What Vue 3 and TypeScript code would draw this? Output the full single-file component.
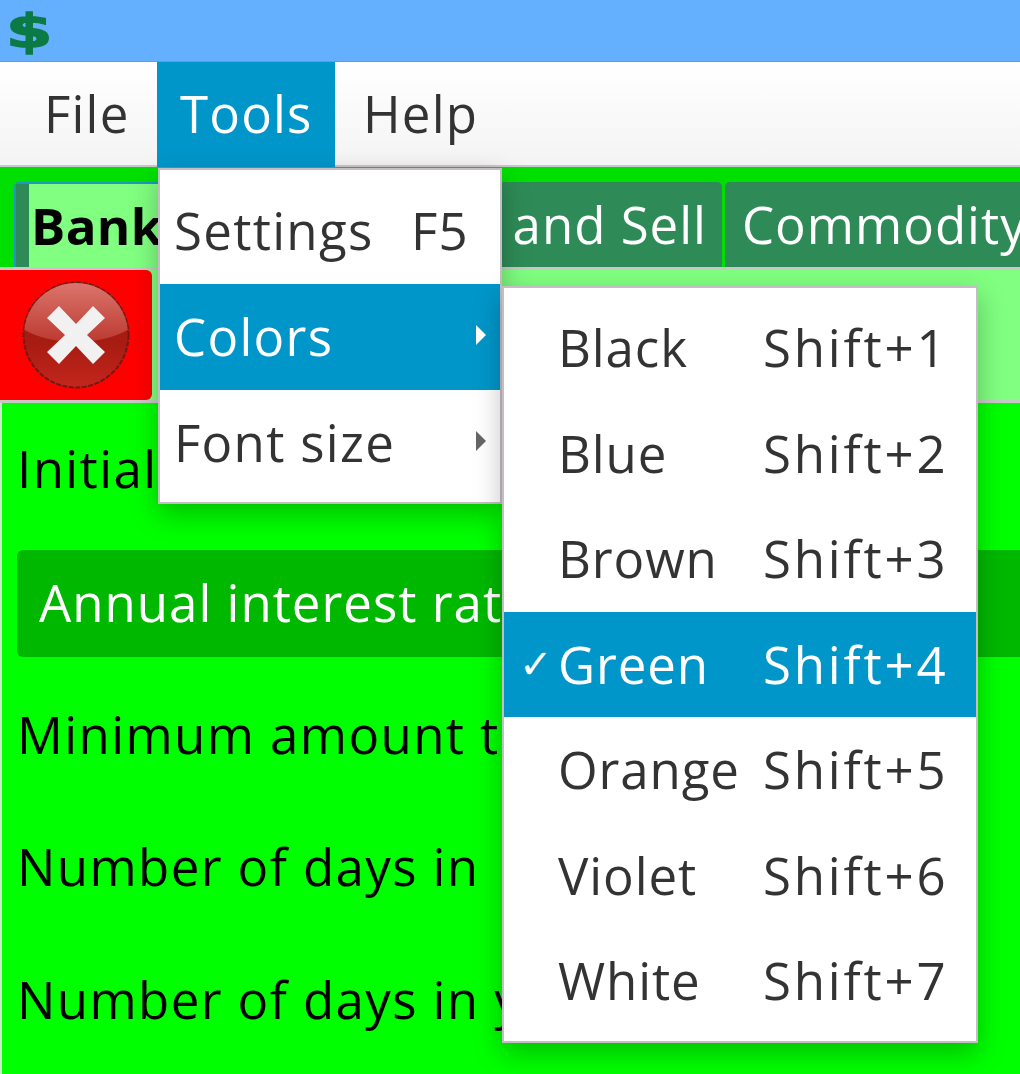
<script setup lang="ts">
const topMenus = ['File', 'Tools', 'Help']
const toolItems = [
  { label: 'Settings', key: 'F5', sub: false, active: false },
  { label: 'Colors', key: '', sub: true, active: true },
  { label: 'Font size', key: '', sub: true, active: false },
]
const colors = ['Black', 'Blue', 'Brown', 'Green', 'Orange', 'Violet', 'White']
const rows = [
  { text: 'Initial deposit', cls: 'plain r1' },
  { text: 'Annual interest rate', cls: 'strong' },
  { text: 'Minimum amount to deposit', cls: 'plain r3' },
  { text: 'Number of days in', cls: 'plain r4' },
  { text: 'Number of days in year', cls: 'plain r5' },
]
</script>

<template>
  <div class="app">
    <header class="title"><span class="dollar">$</span></header>
    <nav class="menubar">
      <div v-for="m in topMenus" :key="m" class="top" :class="{ on: m === 'Tools' }">{{ m }}</div>
    </nav>
    <div class="tabs">
      <div class="tab sel"><span class="stripe"></span><b>Bank</b></div>
      <div class="tab second">Buy and Sell</div>
      <div class="tab third">Commodity</div>
    </div>
    <div class="band">
      <button class="close" type="button" aria-label="Close">
        <svg width="110" height="110" viewBox="0 0 110 110">
          <defs>
            <linearGradient id="ball" x1="0" y1="0" x2="0" y2="1">
              <stop offset="0" stop-color="#9c2018" />
              <stop offset=".6" stop-color="#a81c12" />
              <stop offset="1" stop-color="#c4261c" />
            </linearGradient>
            <linearGradient id="gloss" x1="0" y1="0" x2="0" y2="1">
              <stop offset="0" stop-color="#e58a82" />
              <stop offset="1" stop-color="#bc3a30" />
            </linearGradient>
            <clipPath id="ballClip"><circle cx="55" cy="55" r="52" /></clipPath>
          </defs>
          <circle cx="55" cy="55" r="52.5" fill="url(#ball)" stroke="#6e1a16" stroke-width="2" stroke-dasharray="5 1.5" />
          <ellipse cx="55" cy="22" rx="72" ry="40" fill="url(#gloss)" clip-path="url(#ballClip)" />
          <path d="M55 44 L72 26 L84 38 L66 55 L84 72 L72 84 L55 66 L38 84 L26 72 L44 55 L26 38 L38 26 Z" fill="#f1f1f1" />
        </svg>
      </button>
    </div>
    <main class="content">
      <div v-for="r in rows" :key="r.text" class="row" :class="r.cls">{{ r.text }}</div>
    </main>

    <div class="menu tools">
      <div v-for="i in toolItems" :key="i.label" class="item" :class="{ on: i.active }">
        <span>{{ i.label }}</span>
        <span v-if="i.key">{{ i.key }}</span>
        <span v-if="i.sub" class="arrow"></span>
      </div>
    </div>
    <div class="menu sub">
      <div v-for="(c, n) in colors" :key="c" class="citem" :class="{ on: c === 'Green' }">
        <span class="check">{{ c === 'Green' ? '✓' : '' }}</span>
        <span class="cname">{{ c }}</span>
        <span class="ckey">Shift+{{ n + 1 }}</span>
      </div>
    </div>
  </div>
</template>

<style>
html, body { margin: 0; background: #00ff00; }
</style>

<style scoped>
.app {
  position: relative;
  width: 1020px;
  height: 1074px;
  overflow: hidden;
  background: #00ff00;
  font-family: "Open Sans", "Noto Sans", sans-serif;
  font-size: 51px;
  color: #333;
}
.title {
  box-sizing: border-box;
  height: 62px;
  background: #64b0ff;
  border-bottom: 1px solid #5a9fe0;
  display: flex;
  align-items: center;
  padding-left: 6px;
}
.dollar {
  display: inline-block;
  font-family: "DejaVu Sans", sans-serif;
  font-weight: 700;
  font-size: 46px;
  line-height: 50px;
  color: #0b7a45;
  -webkit-text-stroke: 1.5px #0b7a45;
  transform: scaleX(1.45);
  transform-origin: left center;
}
.menubar {
  box-sizing: border-box;
  height: 105px;
  display: flex;
  padding-left: 17px;
  background: linear-gradient(#fff, #f4f4f4);
  border-bottom: 2px solid #c8c8c8;
}
.top {
  width: 140px;
  padding-left: 27px;
  line-height: 103px;
  height: 105px;
  box-sizing: border-box;
  letter-spacing: 1.2px;
}
.top.on { width: 178px; background: #0096c9; color: #fff; padding-left: 23px; }
.top:nth-child(3) { width: 200px; padding-left: 28px; }
.tabs {
  box-sizing: border-box;
  height: 100px;
  background: #00e000;
  padding: 15px 0 0 14px;
  display: flex;
  gap: 3px;
  overflow: hidden;
  white-space: nowrap;
}
.tab {
  box-sizing: border-box;
  flex: none;
  height: 85px;
  line-height: 84px;
  background: #2e8b57;
  color: #fff;
  border-radius: 5px 5px 0 0;
  letter-spacing: 1px;
}
.tab.sel {
  position: relative;
  width: 336px;
  background: #80ff80;
  color: #000;
  border: 2px solid #1e96c8;
  border-bottom: none;
  padding-left: 15px;
  line-height: 82px;
  letter-spacing: 0.4px;
}
.stripe {
  position: absolute;
  left: 0;
  top: 0;
  bottom: 0;
  width: 13px;
  background: #2e8b57;
}
.tab.second { width: 369px; padding-right: 15px; text-align: right; }
.tab.third { width: 400px; padding-left: 17px; }
.band {
  box-sizing: border-box;
  height: 136px;
  background: #80ff80;
  border-top: 3px solid #c8c8c8;
  border-bottom: 3px solid #c8c8c8;
  display: flex;
}
.close {
  width: 152px;
  height: 130px;
  margin: 0;
  padding: 0;
  border: none;
  background: #ff0000;
  border-radius: 0 6px 6px 0;
  display: flex;
  align-items: center;
  justify-content: center;
}
.content {
  height: 671px;
  box-sizing: border-box;
  padding-left: 2px;
  border-left: 2px solid #c8f0c8;
  color: #000;
  white-space: nowrap;
}
.row { line-height: 64px; padding-left: 13px; letter-spacing: 1.4px; }
.r1 { padding-top: 33px; padding-bottom: 50px; }
.strong {
  height: 107px;
  line-height: 104px;
  margin-left: 13px;
  padding-left: 22px;
  background: #00b800;
  color: #fff;
  border-radius: 6px 0 0 6px;
  letter-spacing: 1px;
}
.r3 { padding-top: 45px; }
.r4 { padding-top: 68px; }
.r5 { padding-top: 69px; }
.menu {
  position: absolute;
  box-sizing: border-box;
  background: #fff;
  border: 2px solid #c4bec4;
  box-shadow: 0 10px 26px rgba(0, 0, 0, 0.26);
}
.tools {
  left: 158px;
  top: 168px;
  width: 344px;
  height: 336px;
  padding-top: 8px;
}
.item {
  position: relative;
  height: 106px;
  line-height: 104px;
  padding: 0 31px 0 14px;
  display: flex;
  justify-content: space-between;
  letter-spacing: 1.3px;
}
.item.on, .citem.on { background: #0096c9; color: #fff; }
.arrow {
  position: absolute;
  right: 14px;
  top: 41px;
  border-left: 10px solid #666;
  border-top: 10px solid transparent;
  border-bottom: 10px solid transparent;
}
.item.on .arrow { border-left-color: #fff; }
.sub {
  left: 502px;
  top: 286px;
  width: 476px;
  height: 757px;
  padding-top: 7px;
}
.citem {
  height: 105.5px;
  line-height: 104px;
  display: flex;
  letter-spacing: 0.9px;
}
.check {
  width: 54px;
  padding-left: 15px;
  box-sizing: border-box;
  font-family: "DejaVu Sans", sans-serif;
  font-size: 40px;
}
.cname { width: 205px; }
.ckey { letter-spacing: 2.8px; }
</style>
